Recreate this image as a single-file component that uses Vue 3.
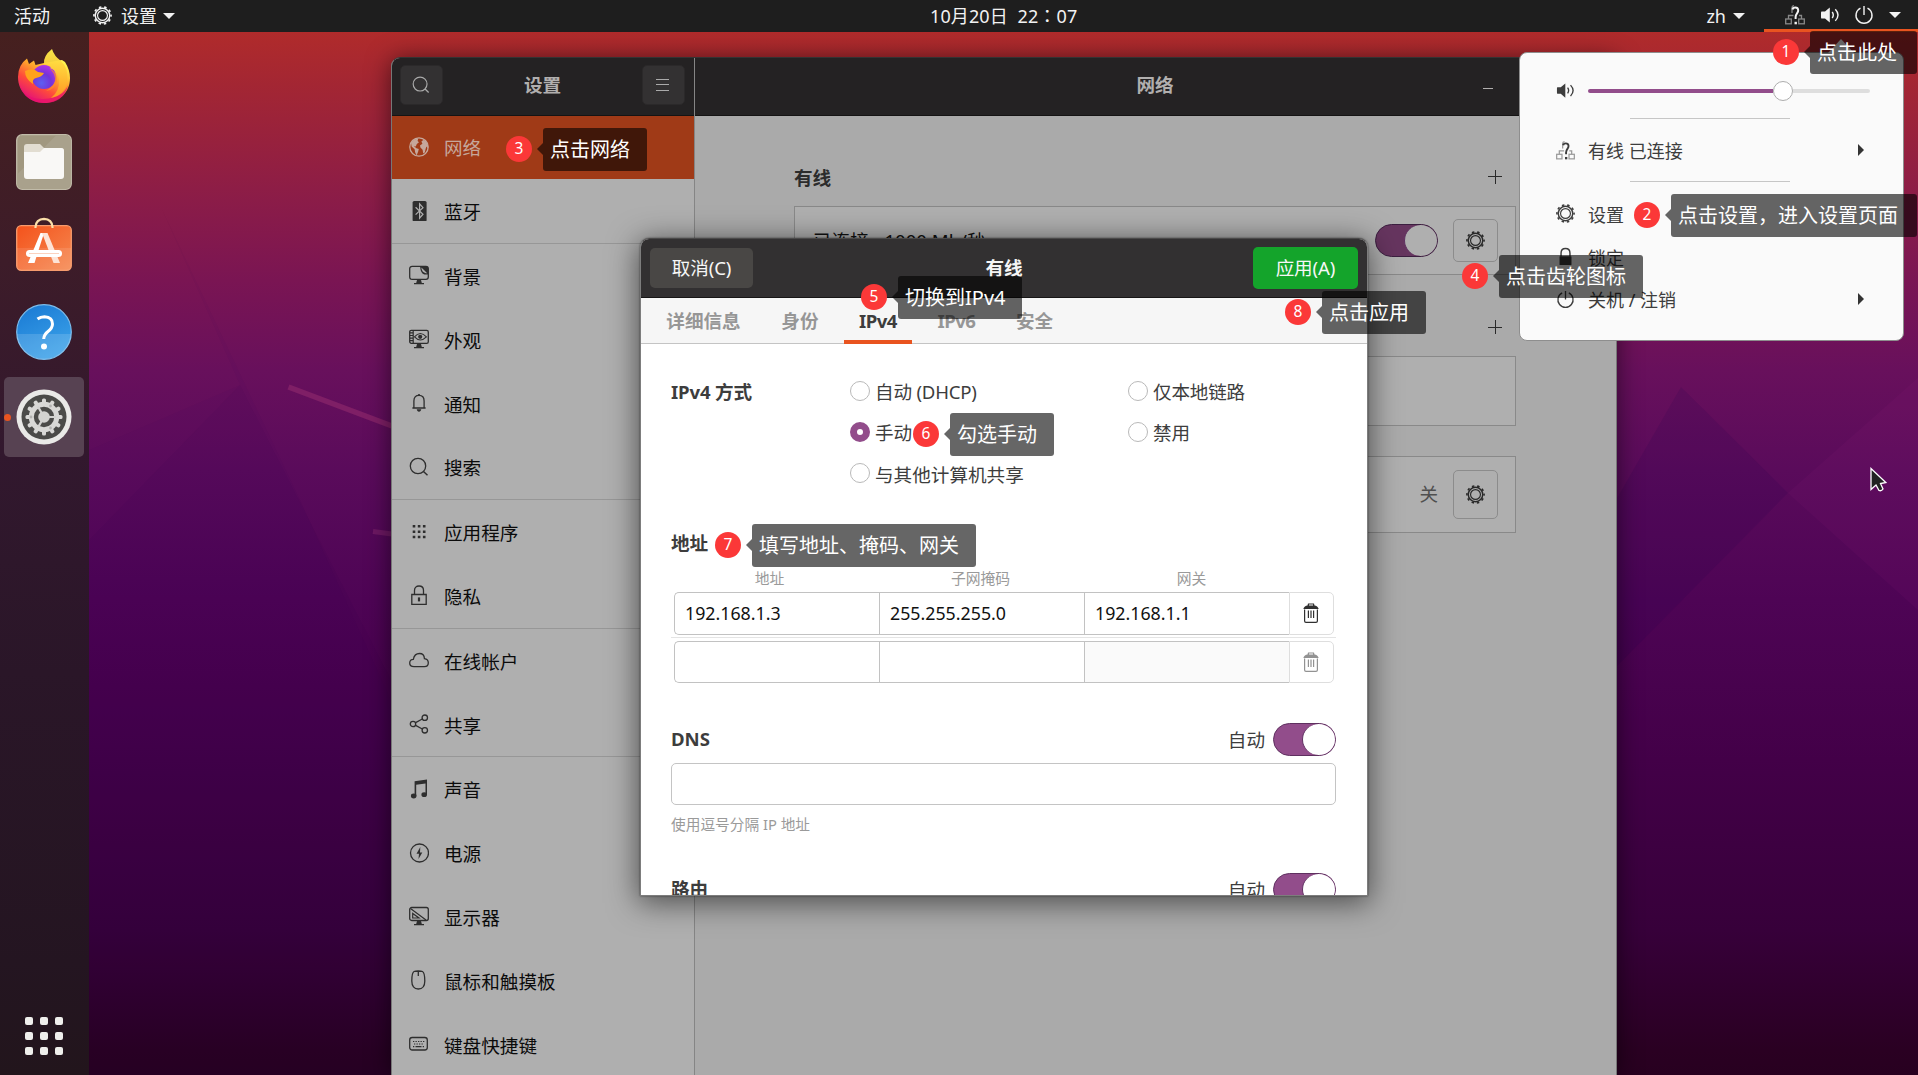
<script setup>
const groups = [
  [
    { icon: 'globe', label: '网络', active: true },
    { icon: 'bluetooth', label: '蓝牙' },
  ],
  [
    { icon: 'background', label: '背景' },
    { icon: 'appearance', label: '外观' },
    { icon: 'bell', label: '通知' },
    { icon: 'search', label: '搜索' },
  ],
  [
    { icon: 'apps', label: '应用程序' },
    { icon: 'padlock', label: '隐私' },
  ],
  [
    { icon: 'cloud', label: '在线帐户' },
    { icon: 'share', label: '共享' },
  ],
  [
    { icon: 'music', label: '声音' },
    { icon: 'energy', label: '电源' },
    { icon: 'display', label: '显示器' },
    { icon: 'mouse', label: '鼠标和触摸板' },
    { icon: 'keyboard', label: '键盘快捷键' },
  ],
]

const tabs = ['详细信息', '身份', 'IPv4', 'IPv6', '安全']
const activeTab = 'IPv4'

const methods = [
  ['自动 (DHCP)', '手动', '与其他计算机共享'],
  ['仅本地链路', '禁用'],
]
const selectedMethod = '手动'

const addressRows = [
  { cells: ['192.168.1.3', '255.255.255.0', '192.168.1.1'], filled: true },
  { cells: ['', '', ''], filled: false },
]

const steps = [
  { n: 1, x: 1786, y: 52, text: '点击此处', min: 107 },
  { n: 2, x: 1647, y: 215, text: '点击设置，进入设置页面', min: 246 },
  { n: 3, x: 519, y: 149, text: '点击网络' },
  { n: 4, x: 1475, y: 276, text: '点击齿轮图标' },
  { n: 5, x: 874, y: 297, text: '切换到IPv4' },
  { n: 6, x: 926, y: 434, text: '勾选手动' },
  { n: 7, x: 728, y: 545, text: '填写地址、掩码、网关' },
  { n: 8, x: 1298, y: 312, text: '点击应用' },
]

const dockTeeth = Array.from({ length: 12 }, (_, i) => i * 30)
</script>

<template>
  <div class="desktop">
    <svg class="sprite" width="0" height="0" aria-hidden="true">
      <symbol id="gear" viewBox="0 0 20 20">
        <circle cx="10" cy="10" r="7.6" fill="none" stroke="currentColor" stroke-width="1.5" />
        <circle cx="10" cy="10" r="9" fill="none" stroke="currentColor" stroke-width="1.7" stroke-dasharray="2.6 3.055" stroke-dashoffset="1.3" />
        <circle cx="10" cy="10" r="5.2" fill="none" stroke="currentColor" stroke-width="1.2" />
      </symbol>
      <symbol id="search" viewBox="0 0 20 20">
        <circle cx="9" cy="9" r="7.7" fill="none" stroke="currentColor" stroke-width="1.3" />
        <path d="M14.5 14.5 18.5 18.2" fill="none" stroke="currentColor" stroke-width="1.5" />
      </symbol>
      <symbol id="globe" viewBox="0 0 20 20">
        <circle cx="10" cy="10" r="9.2" fill="none" stroke="currentColor" stroke-width="1.3" />
        <path d="M2 5.5 5 2.6 9.2 1.4 8.6 4 10 5.2 7.8 7 6.8 9.4 4.8 9 7.4 11.2 9.8 12 9.2 14.6 7.6 18.6 6.2 15.4 5.6 12.2 2.6 9.6Z" fill="currentColor" />
        <path d="M12.4 4.4 14.2 3 16.6 3.6 19 8 18.8 11.4 17.4 9.6 16.6 12 15.8 15.6 14.2 16.6 13.6 12.8 11.4 10.6 11 8.4 13.4 6.8Z" fill="currentColor" />
      </symbol>
      <symbol id="bluetooth" viewBox="0 0 20 20">
        <rect x="3.6" y="0" width="14" height="20.5" rx="1.6" fill="currentColor" />
        <path d="M6.6 6.3 14 13.2 10.6 17.2V2.8L14 6.6 6.6 13.6" fill="none" stroke="#afafaf" stroke-width="1.2" />
      </symbol>
      <symbol id="background" viewBox="0 0 20 20">
        <rect x=".7" y="1.3" width="18.6" height="13" rx="2.4" fill="none" stroke="currentColor" stroke-width="1.3" />
        <path d="M11 1.3H17.5Q19.3 1.3 19.3 4V9.4H15.4Q11.8 9 11 1.3Z" fill="currentColor" />
        <path d="M12.4 2.4C12.6 5.8 14.4 8.2 18.2 8.2L16 6Z" fill="#afafaf" />
        <path d="M8 15h4l.8 3H15v1.3H5V18h2.2Z" fill="currentColor" />
      </symbol>
      <symbol id="appearance" viewBox="0 0 20 20">
        <rect x=".7" y="1.3" width="18.6" height="13" rx="1.6" fill="none" stroke="currentColor" stroke-width="1.3" />
        <path d="M4.2 1V14M1 3.9h3M1 6.5h3M1 9.1h3M1 11.7h3" stroke="currentColor" stroke-width="1.2" />
        <path d="M5.5 7.9Q11.3 1 17.4 7.9 11.3 14 5.5 7.9Z" fill="none" stroke="currentColor" stroke-width="1.1" />
        <circle cx="11.2" cy="7.8" r="2.1" fill="currentColor" />
        <path d="M8 15h4l.8 3H15v1.3H5V18h2.2Z" fill="currentColor" />
      </symbol>
      <symbol id="bell" viewBox="0 0 20 20">
        <path d="M4.9 14.6V8C4.9 4 7 2.4 10 2.4S15.1 4 15.1 8V14.6M3.4 15h13.2" fill="none" stroke="currentColor" stroke-width="1.3" />
        <path d="M9.2 1h1.6v1.5H9.2ZM7.7 16.3h4.6C12 18 11.2 18.7 10 18.7S8 18 7.7 16.3Z" fill="currentColor" />
      </symbol>
      <symbol id="apps" viewBox="0 0 20 20">
        <path d="M3.7 4.2h2.6M8.8 4.2h2.6M13.9 4.2h2.6M3.7 9.7h2.6M8.8 9.7h2.6M13.9 9.7h2.6M3.7 15h2.6M8.8 15h2.6M13.9 15h2.6" stroke="currentColor" stroke-width="2.5" />
      </symbol>
      <symbol id="padlock" viewBox="0 0 20 20">
        <path d="M2.8 9.5h14.4v9.9H2.8ZM5.5 9.5V5.4C5.5 2.6 7.4 1 10 1s4.5 1.6 4.5 4.4V9.5" fill="none" stroke="currentColor" stroke-width="1.3" />
        <path d="M10 12.4v4" stroke="currentColor" stroke-width="2.2" />
      </symbol>
      <symbol id="cloud" viewBox="0 0 20 20">
        <path d="M5 16.7C2.4 16.7.7 15.2.7 13 .7 10.800 2.300 9.300 4.300 9.300 5 6 7.300 3.500 10.500 3.500c3 0 4.800 2.200 4.900 5.100 2.200.3 3.900 1.900 3.900 4.200 0 2.400-1.600 3.900-3.900 3.900Z" fill="none" stroke="currentColor" stroke-width="1.3" />
      </symbol>
      <symbol id="share" viewBox="0 0 20 20">
        <g fill="none" stroke="currentColor" stroke-width="1.3">
          <circle cx="4" cy="10" r="2.7" />
          <circle cx="15.8" cy="3.7" r="2.7" />
          <circle cx="15.8" cy="16.3" r="2.7" />
          <path d="M6.6 8.6 13.3 5M6.6 11.4 13.3 15" />
        </g>
      </symbol>
      <symbol id="music" viewBox="0 0 20 20">
        <path d="M5.6 2.2 18 .4V15.7H16.5V4.500L7.200 5.700V17H5.600Z" fill="currentColor" />
        <ellipse cx="4.7" cy="17" rx="2.8" ry="2.4" fill="currentColor" />
        <ellipse cx="15.2" cy="15.7" rx="2.8" ry="2.4" fill="currentColor" />
      </symbol>
      <symbol id="energy" viewBox="0 0 20 20">
        <circle cx="10.5" cy="10" r="9" fill="none" stroke="currentColor" stroke-width="1.3" />
        <path d="M11.3 4 7.5 10.7H10L9.5 16 13.3 9.5H11Z" fill="currentColor" />
      </symbol>
      <symbol id="display" viewBox="0 0 20 20">
        <rect x=".7" y="1.5" width="18.6" height="13" rx="2" fill="none" stroke="currentColor" stroke-width="1.3" />
        <path d="M1.500 2.500 17 14M3.700 7.500V12H10Z" fill="none" stroke="currentColor" stroke-width="1.2" />
        <path d="M8 15h4l.8 3H15v1.300H5V18h2.200Z" fill="currentColor" />
      </symbol>
      <symbol id="mouse" viewBox="0 0 20 20">
        <path d="M5 1.500C6.500.8 12 .8 13.500 1.500 15 2.300 15.800 7 15.800 11 15.800 16 13.500 19 9.300 19S2.800 16 2.800 11C2.800 7 3.500 2.300 5 1.500ZM9.300 1V6" fill="none" stroke="currentColor" stroke-width="1.3" />
      </symbol>
      <symbol id="keyboard" viewBox="0 0 20 20">
        <rect x=".7" y="3.5" width="17.6" height="12.5" rx="2.5" fill="none" stroke="currentColor" stroke-width="1.3" />
        <path d="M4 7.500H15.500M5 10H15" stroke="currentColor" stroke-width="1.2" stroke-dasharray="1.3 1.2" />
        <path d="M4 12.700h1.300M6.500 12.700h6M13.700 12.700H15" stroke="currentColor" stroke-width="1.2" />
      </symbol>
      <symbol id="wired" viewBox="0 0 20 20">
        <g fill="none" stroke="currentColor" stroke-width="1.3" opacity=".5">
          <rect x=".7" y="14" width="5.6" height="4.8" />
          <rect x="13.7" y="14" width="5.6" height="4.8" />
          <path d="M3.500 14V10.500H8.500M16.500 14V10.500H14M7 8V2.500Q7 1 9 .7" />
        </g>
        <path d="M7.500 4.500C8 2 12.800 1.500 13.200 5 13.500 8 10.600 8.500 10.600 12V14" fill="none" stroke="currentColor" stroke-width="2" />
        <path d="M9.500 16.800h2.400v2.500H9.500Z" fill="currentColor" />
      </symbol>
      <symbol id="volume" viewBox="0 0 20 20">
        <path d="M1.500 6.500H5L9.800 2.500V17.500L5 13.500H1.500Q1 13.500 1 12V8Q1 6.500 1.500 6.500Z" fill="currentColor" />
        <path d="M12.200 7Q14.400 10 12.200 13M15.300 4.300Q20.700 10 15.300 15.900" fill="none" stroke="currentColor" stroke-width="1.4" />
      </symbol>
      <symbol id="power" viewBox="0 0 20 20">
        <path d="M6.500 3.100A8 8 0 1 0 13.500 3.100M10 1V10" fill="none" stroke="currentColor" stroke-width="1.4" />
      </symbol>
      <symbol id="lock" viewBox="0 0 20 20">
        <rect x="3.7" y="9.7" width="12.6" height="9.3" rx=".6" fill="currentColor" />
        <path d="M5.300 10V6.500C5.300 3 7.200 1.500 10 1.500s4.700 1.500 4.700 5V10" fill="none" stroke="currentColor" stroke-width="1.5" />
      </symbol>
      <symbol id="trash" viewBox="0 0 20 20">
        <path d="M2.300 6Q3.500 2.800 6.500 2.600L7 .4H13L13.500 2.600Q16.500 2.800 17.700 6ZM8 2.500H12V1.500H8Z" fill="currentColor" fill-rule="evenodd" />
        <path d="M3.600 6.500V18Q3.600 19.300 5 19.300H15Q16.400 19.300 16.400 18V6.500M7.400 7.500V15M10 7.500V15M12.600 7.500V15" fill="none" stroke="currentColor" stroke-width="1.2" />
      </symbol>
    </svg>

    <svg class="wallpaper" viewBox="0 0 1918 1075" preserveAspectRatio="none">
      <path d="M160 205 300 500 391 700V1075H89V450L240 385Z" fill="#200050" opacity=".03" />
      <path d="M240 385 89 540V1075H391V680Z" fill="#1c0048" opacity=".04" />
      <path d="M1681 387 1788 493 1616 667V500Z" fill="#200050" opacity=".13" />
      <path d="M1918 378 1788 493 1918 610Z" fill="#b03090" opacity=".07" />
      <path d="M288.500 387 392 426" stroke="#7f1f66" stroke-width="5.5" />
      <path d="M373 531.500 392 534" stroke="#6d1863" stroke-width="5" />
    </svg>

    <header class="topbar">
      <span class="activities">活动</span>
      <svg class="icon tb-gear"><use href="#gear" /></svg>
      <span class="app-name">设置</span>
      <i class="caret"></i>
      <span class="clock">10月20日&nbsp; 22<span class="colon">：</span>07</span>
      <span class="lang">zh</span>
      <i class="caret lang-caret"></i>
      <div class="tray">
        <svg class="icon"><use href="#wired" /></svg>
        <svg class="icon"><use href="#volume" /></svg>
        <svg class="icon"><use href="#power" /></svg>
        <i class="caret"></i>
      </div>
    </header>

    <nav class="dock">
      <svg class="dock-icon firefox" viewBox="0 0 56 56">
        <defs>
          <linearGradient id="ffBody" x1=".85" y1=".1" x2=".25" y2=".95">
            <stop offset="0" stop-color="#fff44f" />
            <stop offset=".35" stop-color="#ffa72b" />
            <stop offset=".65" stop-color="#ff4b3a" />
            <stop offset="1" stop-color="#e3107a" />
          </linearGradient>
          <linearGradient id="ffFlame" x1=".5" y1="0" x2=".5" y2="1">
            <stop offset="0" stop-color="#fff04a" />
            <stop offset="1" stop-color="#ff9a22" />
          </linearGradient>
          <radialGradient id="ffGlobe" cx=".4" cy=".75" r=".8">
            <stop offset="0" stop-color="#5d5ff0" />
            <stop offset=".5" stop-color="#7434d8" />
            <stop offset="1" stop-color="#b833e8" />
          </radialGradient>
        </defs>
        <path d="M11 10.500 13 16 18 12.500 19.500 17 28 15 46 12 49 14Q54 22 54 30C54 45 42 55 28 55S2 44 2 29Q2 17 11 10.500Z" fill="url(#ffBody)" />
        <path d="M3 35Q8 52 28 51 47 50 52 37 48 55 28 55 8 54 3 35Z" fill="#e8106f" opacity=".75" />
        <circle cx="28" cy="29" r="12" fill="url(#ffGlobe)" />
        <path d="M28 16Q27 8 36 1 38 8 45 13 53 20 51 34 49 47 35 50 44 43 43 31 42 23 34 20 38 18 28 16Z" fill="url(#ffFlame)" opacity=".95" />
        <path d="M33 20Q42 24 41 33 39 42 30 43 40 37 39 30 38 24 33 20Z" fill="#ff8a2a" opacity=".7" />
        <path d="M9 23Q17 19 22 24L28 25Q26 29 20 30 16 31 17 36 9 31 9 23Z" fill="#ffa21c" />
      </svg>
      <svg class="dock-icon" viewBox="0 0 56 56">
        <rect x=".7" y=".7" width="54.6" height="54.6" rx="5.5" fill="#a19880" stroke="#c1bba9" stroke-width="1.3" />
        <path d="M1.500 40 40 1.500H50Q54.500 1.500 54.500 6V50Q54.500 54.500 50 54.500H6Q1.500 54.500 1.500 50Z" fill="#a9a18c" />
        <path d="M8 13Q8 10 11 10H24L28 14H45Q48 14 48 17V25H8Z" fill="#e2ddd1" />
        <path d="M8 18H24L28 14H45Q48 14 48 17V42Q48 45 45 45H11Q8 45 8 42Z" fill="#f9f8f6" />
      </svg>
      <svg class="dock-icon software" viewBox="0 0 56 56">
        <defs>
          <linearGradient id="bag" x1="0" y1="0" x2="1" y2="1">
            <stop offset="0" stop-color="#f4521b" />
            <stop offset="1" stop-color="#f58a52" />
          </linearGradient>
        </defs>
        <rect x=".7" y="9.7" width="54.6" height="44.6" rx="4.5" fill="url(#bag)" stroke="#f79b6d" stroke-width="1.3" />
        <path d="M1 32H55V50Q55 54 51 54H5Q1 54 1 50Z" fill="#fff" opacity=".1" />
        <path d="M19.500 12V11Q20 3 28 2.800 36 3 36.500 11V12" fill="none" stroke="#fbe0a9" stroke-width="2.2" />
        <path d="M24.500 17H28L18.500 47H12Z" fill="#fff" />
        <path d="M26 17H31.500L44 47H37.500Z" fill="#fde3d6" />
        <rect x="10" y="34" width="36" height="7" rx="3.5" fill="#fff" />
        <path d="M13 37.500H43" stroke="#fbd2bf" stroke-width="1" />
      </svg>
      <svg class="dock-icon help" viewBox="0 0 56 56">
        <defs>
          <linearGradient id="helpBlue" x1="0" y1="0" x2=".5" y2="1">
            <stop offset="0" stop-color="#1878d3" />
            <stop offset="1" stop-color="#3aa0e8" />
          </linearGradient>
        </defs>
        <circle cx="28" cy="28" r="27.3" fill="url(#helpBlue)" stroke="#7cbdec" stroke-width="1.2" />
        <path d="M1 30H55A27 25 0 0 1 1 30Z" fill="#fff" opacity=".14" />
        <path d="M21.500 15Q24.500 12.700 28.500 12.700 36.500 13 36.500 20 36.500 24 32 27.500 28 30.500 27.700 35" fill="none" stroke="#fff" stroke-width="3" />
        <circle cx="28" cy="42.5" r="3" fill="#fff" />
      </svg>
      <div class="dock-active">
        <svg class="dock-icon" viewBox="0 0 56 56">
          <circle cx="28" cy="28" r="27.5" fill="#e9e9e7" />
          <circle cx="28" cy="28" r="22.5" fill="#4b4b49" />
          <g fill="#d8d8d6">
            <rect v-for="a in dockTeeth" :key="a" x="26" y="9.5" width="4" height="6" rx="1.5" :transform="`rotate(${a} 28 28)`" />
          </g>
          <circle cx="28" cy="28" r="12.7" fill="none" stroke="#d8d8d6" stroke-width="5" />
          <circle cx="28" cy="28" r="5.8" fill="#d2d2d0" />
          <path d="M28 28H40M28 28 22 17.600M28 28 22 38.400" stroke="#d2d2d0" stroke-width="2.2" />
          <g fill="#b2b2b0"><circle cx="15" cy="28" r="1.4" /><circle cx="34.5" cy="17" r="1.4" /><circle cx="34.5" cy="39" r="1.4" /></g>
        </svg>
      </div>
      <div class="app-grid"><i v-for="n in 9" :key="n"></i></div>
    </nav>

    <section class="settings">
      <aside class="sidebar">
        <div class="titlebar">
          <button class="tool"><svg class="icon"><use href="#search" /></svg></button>
          <b>设置</b>
          <button class="tool"><span class="burger"></span></button>
        </div>
        <ul v-for="(group, g) in groups" :key="g" class="group">
          <li v-for="item in group" :key="item.label" class="item" :class="{ active: item.active }">
            <svg class="icon"><use :href="'#' + item.icon" /></svg>
            <span>{{ item.label }}</span>
          </li>
        </ul>
      </aside>
      <main class="panel">
        <div class="titlebar">
          <b>网络</b>
          <i class="minimize"></i>
        </div>
        <div class="panel-body">
          <div class="section-head"><b>有线</b><i class="plus"></i></div>
          <div class="card wired-card">
            <span class="status">已连接 - 1000 Mb/秒</span>
            <span class="switch dim"></span>
            <span class="gear-btn"><svg class="icon"><use href="#gear" /></svg></span>
          </div>
          <div class="section-head second"><i class="plus"></i></div>
          <div class="card"></div>
          <div class="card proxy-card">
            <span class="off">关</span>
            <span class="gear-btn tall"><svg class="icon"><use href="#gear" /></svg></span>
          </div>
        </div>
      </main>
    </section>

    <section class="dialog">
      <div class="dialog-head">
        <button class="btn cancel">取消(C)</button>
        <b>有线</b>
        <button class="btn apply">应用(A)</button>
      </div>
      <div class="tabs">
        <span v-for="t in tabs" :key="t" class="tab" :class="{ on: t === activeTab, latin: t.startsWith('IP') }">{{ t }}</span>
      </div>
      <div class="form">
        <div class="method">
          <b class="method-label">IPv4 方式</b>
          <div v-for="(col, c) in methods" :key="c" class="radios">
            <div v-for="m in col" :key="m" class="radio">
              <i class="dot" :class="{ checked: m === selectedMethod }"></i><span>{{ m }}</span>
            </div>
          </div>
        </div>
        <b class="addr-title">地址</b>
        <div class="addr-heads"><span>地址</span><span>子网掩码</span><span>网关</span></div>
        <div v-for="(row, r) in addressRows" :key="r" class="addr-row" :class="{ empty: !row.filled }">
          <span v-for="(cell, i) in row.cells" :key="i" class="cell">{{ cell }}</span>
          <span class="del"><svg class="icon"><use href="#trash" /></svg></span>
        </div>
        <div class="auto-row dns"><b>DNS</b><span>自动</span><i class="switch"></i></div>
        <div class="dns-input"></div>
        <div class="hint">使用逗号分隔 IP 地址</div>
        <div class="auto-row route"><b>路由</b><span>自动</span><i class="switch"></i></div>
      </div>
    </section>

    <section class="menu">
      <i class="menu-tip"></i>
      <div class="menu-row volume-row">
        <svg class="icon"><use href="#volume" /></svg>
        <div class="slider"><i class="fill"></i><i class="knob"></i><i class="rest"></i></div>
      </div>
      <hr />
      <div class="menu-row wired-row">
        <svg class="icon"><use href="#wired" /></svg><span>有线 已连接</span><i class="more"></i>
      </div>
      <hr />
      <div class="menu-row first"><svg class="icon"><use href="#gear" /></svg><span>设置</span></div>
      <div class="menu-row"><svg class="icon"><use href="#lock" /></svg><span>锁定</span></div>
      <div class="menu-row"><svg class="icon"><use href="#power" /></svg><span>关机 / 注销</span><i class="more"></i></div>
    </section>

    <svg class="cursor" viewBox="0 0 17 25">
      <path d="M1 1.500V22.500L6 18 9 23.500Q11.500 24.500 13 22L10.500 16.500 15.800 15.500Z" fill="#222" stroke="#fff" stroke-width="1.3" />
    </svg>

    <div v-for="s in steps" :key="s.n" class="step" :style="{ left: s.x - 13 + 'px', top: s.y - 21 + 'px' }">
      <span class="badge">{{ s.n }}</span>
      <span class="tip" :style="{ minWidth: (s.min || 0) + 'px' }">{{ s.text }}</span>
    </div>
  </div>
</template>

<style>
body {
  margin: 0;
  overflow: hidden;
}
</style>

<style scoped>
* {
  box-sizing: border-box;
}
.desktop {
  position: relative;
  width: 1918px;
  height: 1075px;
  overflow: hidden;
  font-family: "Noto Sans", "Noto Sans CJK SC", sans-serif;
  font-size: 18.6px;
  line-height: 26px;
  color: #3d3d3d;
  white-space: nowrap;
  background: linear-gradient(#b02b2b 32px, #a32633 85px, #8b1c48 200px, #7a1553 280px, #68105c 370px, #5a0b5b 470px, #4e0455 600px, #430048 760px, #37003a 930px, #2a0022 1050px, #280020 1075px);
}
.sprite {
  position: absolute;
}
.wallpaper {
  position: absolute;
  inset: 0;
  width: 100%;
  height: 100%;
}
.icon {
  display: block;
  flex: none;
  width: 20px;
  height: 20px;
  overflow: visible;
}
.topbar {
  position: relative;
  display: flex;
  align-items: center;
  height: 32px;
  padding-left: 14px;
  padding-bottom: 1px;
  background: #1e1e1e;
  color: #f2f2f2;
  font-size: 18px;
}
.activities {
  width: 79px;
}
.tb-gear {
  width: 19px;
  height: 19px;
  margin-right: 9px;
}
.app-name {
  width: 42px;
}
.caret {
  border: 6px solid transparent;
  border-top: 6.5px solid currentColor;
  border-bottom: 0;
}
.clock {
  width: 150px;
  margin-left: 755px;
  letter-spacing: .12px;
}
.colon {
  font-family: "Noto Sans CJK TC", sans-serif;
}
.lang {
  margin-left: auto;
  margin-right: 7px;
}
.lang-caret {
  margin-right: 19px;
}
.tray {
  display: flex;
  align-items: center;
  gap: 14.6px;
  width: 154px;
  height: 32px;
  margin-bottom: -1px;
  padding-top: 1px;
  padding-left: 21px;
  border-bottom: 3px solid #e95420;
}
.dock {
  position: relative;
  display: flex;
  flex-direction: column;
  align-items: center;
  width: 89px;
  height: 1043px;
  padding-top: 16px;
  background: linear-gradient(#46201f, #3d1c29 230px, #32182e 420px, #2a1628 640px, #241521 930px, #22151c);
}
.dock-icon {
  display: block;
  width: 56px;
  height: 56px;
  margin-right: 1px;
  margin-bottom: 28px;
}
.firefox {
  margin-bottom: 30px;
}
.software {
  margin-top: -2px;
  margin-bottom: 32px;
}
.help {
  margin-bottom: 17px;
}
.dock-active {
  display: flex;
  align-items: center;
  justify-content: center;
  width: 80px;
  height: 80px;
  margin-right: 1px;
  border-radius: 5px;
  background: #574252;
}
.dock-active .dock-icon {
  margin: 0 12px 0 0;
}
.dock-active::before {
  content: "";
  flex: none;
  width: 7px;
  height: 7px;
  margin-right: 5px;
  border-radius: 50%;
  background: #e95420;
}
.app-grid {
  display: grid;
  grid-template-columns: repeat(3, 8px);
  gap: 7px;
  margin: auto 1px 20px 0;
}
.app-grid i {
  height: 8px;
  border-radius: 2px;
  background: #efefec;
}
.settings {
  position: absolute;
  left: 391px;
  top: 57px;
  display: flex;
  width: 1226px;
  height: 1018px;
  border: 1px solid #777;
  border-top-color: #353333;
  border-bottom: 0;
  border-radius: 9px 9px 0 0;
  overflow: clip;
  background: #aaa;
  box-shadow: 0 2px 24px rgba(0, 0, 0, .55);
}
.sidebar {
  width: 303px;
  background: #afafaf;
  border-right: 1px solid #858585;
}
.titlebar {
  display: flex;
  align-items: center;
  justify-content: space-between;
  height: 57.5px;
  padding: 0 9px 2px 8px;
  background: #242223;
  border-bottom: 1px solid #151414;
  color: #b1afae;
}
.tool {
  display: flex;
  align-items: center;
  justify-content: center;
  width: 43px;
  height: 40px;
  padding: 0 1px 1px 0;
  border: 1px solid #2b292a;
  border-radius: 5px;
  background: #333132;
  color: #aaa;
}
.tool .icon {
  width: 18px;
  height: 18px;
}
.burger {
  width: 13px;
  height: 12px;
  border-top: 1px solid #aaa;
  border-bottom: 1px solid #aaa;
  background: linear-gradient(#aaa, #aaa) center / 100% 1px no-repeat;
}
.group {
  margin: 0;
  padding: 0;
  list-style: none;
  border-bottom: 1px solid #979797;
}
.item {
  display: flex;
  align-items: center;
  gap: 15px;
  height: 63.8px;
  padding: 0 0 1px 17px;
  color: #2e2e2e;
}
.item span {
  padding-top: 3px;
  color: #0b0b0b;
}
.item.active {
  background: #a03a17;
}
.item.active .icon,
.item.active span {
  color: #c6a79b;
}
.panel {
  flex: 1;
}
.panel .titlebar {
  justify-content: center;
  position: relative;
}
.minimize {
  position: absolute;
  right: 123px;
  top: 30px;
  width: 10px;
  height: 1px;
  background: #b1afae;
}
.panel-body {
  padding: 41px 100px 0 99px;
}
.section-head {
  display: flex;
  align-items: center;
  height: 42px;
  padding-right: 14px;
  color: #2c2c2c;
}
.plus {
  width: 14px;
  height: 14px;
  margin-left: auto;
  margin-top: -2px;
  background: linear-gradient(#2a2a2a, #2a2a2a) center / 14px 1px no-repeat, linear-gradient(#2a2a2a, #2a2a2a) center / 1px 14px no-repeat;
}
.card {
  display: flex;
  align-items: center;
  height: 70px;
  border: 1px solid #898989;
  background: #afafaf;
  padding: 0 17px 0 18px;
}
.wired-card {
  height: 69px;
  margin-top: 7.5px;
}
.status {
  flex: 1;
  color: #111;
}
.switch {
  display: flex;
  justify-content: flex-end;
  width: 63px;
  height: 33px;
  border: 1px solid #5f3060;
  border-radius: 17px;
  background: #924d8b;
}
.switch::after {
  content: "";
  width: 32px;
  height: 31px;
  border-left: 1px solid #5f3060;
  border-radius: 50%;
  background: #fff;
}
.switch.dim {
  background: #66355f;
  border-color: #3c1f40;
}
.switch.dim::after {
  background: #afafaf;
}
.gear-btn {
  display: flex;
  align-items: center;
  justify-content: center;
  width: 45px;
  height: 43px;
  margin-left: 15px;
  border: 1px solid #8c8c8c;
  border-radius: 5px;
  color: #292929;
}
.gear-btn .icon {
  width: 19px;
  height: 19px;
}
.gear-btn.tall {
  height: 49px;
}
.second {
  margin-top: 32px;
  margin-bottom: 7px;
}
.proxy-card {
  height: 77px;
  margin-top: 29.5px;
}
.off {
  margin-left: auto;
  color: #4f4f4f;
}
.dialog {
  position: absolute;
  left: 640px;
  top: 238px;
  width: 728px;
  height: 658px;
  border: 1px solid #7d7d7d;
  border-top-color: #4a4949;
  border-radius: 9px 9px 0 0;
  overflow: hidden;
  background: #fff;
  box-shadow: 0 5px 30px 2px rgba(0, 0, 0, .55), 0 0 2px rgba(0, 0, 0, .6);
}
.dialog-head {
  display: grid;
  grid-template-columns: 105px 1fr 105px;
  align-items: center;
  height: 59px;
  padding: 0 9px;
  background: #323031;
  border-bottom: 1px solid #171616;
  color: #f5f5f5;
  text-align: center;
}
.btn {
  height: 42px;
  padding: 0;
  border: 0;
  border-radius: 5px;
  color: #f7f7f7;
  font: inherit;
  letter-spacing: -.1px;
}
.cancel {
  width: 103px;
  height: 40px;
  background: #494745;
}
.apply {
  background: #14a42b;
}
.tabs {
  display: flex;
  gap: 10px;
  height: 46px;
  padding-left: 10px;
  background: #f6f6f6;
  border-bottom: 1px solid #c4c4c4;
  font-weight: 700;
  color: #969696;
}
.tab {
  height: 46px;
  padding: 10px 15.3px 0;
}
.tab.latin {
  letter-spacing: -.55px;
}
.tab.on {
  color: #3d3d3d;
  border-bottom: 4px solid #e95420;
}
.form {
  padding: 26px 31px 0 30px;
}
.method {
  display: grid;
  grid-template-columns: 179px 278px 1fr;
  height: 153px;
}
.method-label {
  padding-top: 9px;
  letter-spacing: -.15px;
}
.radio {
  display: flex;
  align-items: center;
  gap: 5px;
  height: 41.3px;
}
.radio span {
  padding-top: 3px;
}
.radio:first-child span {
  letter-spacing: -.2px;
}
.dot {
  width: 20px;
  height: 20px;
  border: 1px solid #b9b9b9;
  border-radius: 50%;
  background: #fff;
}
.dot.checked {
  border: 7px solid #924d8b;
}
.addr-title {
  display: block;
  height: 42px;
  padding-top: 7px;
}
.addr-heads {
  display: grid;
  grid-template-columns: repeat(3, 211px);
  height: 27px;
  margin-left: -7px;
  color: #9a9a9a;
  font-size: 14.8px;
  text-align: center;
}
.addr-row {
  display: grid;
  grid-template-columns: 205px 205px 205px 45px;
  height: 42px;
  margin: 0 3px;
}
.cell {
  padding: 8px 10px;
  border: 1px solid #c2c2c2;
  border-right: 0;
  font-size: 17.8px;
  line-height: 25px;
  color: #111;
}
.cell:first-child {
  border-radius: 5px 0 0 5px;
}
.del {
  display: flex;
  align-items: center;
  justify-content: center;
  border: 1px solid #dedede;
  border-radius: 0 5px 5px 0;
  color: #303030;
  padding: 0 2px 1px 0;
}
.empty {
  position: relative;
  margin-top: 7px;
}
.empty::before {
  content: "";
  position: absolute;
  left: -3px;
  right: -3px;
  top: -4px;
  height: 1px;
  background: #e4e4e4;
}
.empty .cell:nth-child(3) {
  background: #fafafa;
}
.empty .del {
  color: #929292;
}
.auto-row {
  display: flex;
  align-items: center;
  height: 33px;
}
.auto-row b {
  margin-top: -1px;
}
.auto-row span {
  margin-left: auto;
  margin-right: 8px;
}
.dns {
  margin-top: 40px;
}
.dns-input {
  height: 42px;
  margin-top: 7px;
  border: 1px solid #c4c4c4;
  border-radius: 5px;
}
.hint {
  margin-top: 6px;
  color: #9a9a9a;
  font-size: 14.7px;
}
.route {
  margin-top: 36px;
}
.menu {
  position: absolute;
  left: 1519px;
  top: 52px;
  width: 385px;
  height: 289px;
  padding: 17px 33px 0 36px;
  border: 1px solid #8e8e8e;
  border-radius: 8px;
  background: #fafafa;
  font-size: 18px;
}
.menu-tip {
  position: absolute;
  left: 308px;
  top: -14px;
  border: 13px solid transparent;
  border-top: 0;
  border-bottom: 14px solid #fafafa;
}
.menu-row {
  display: flex;
  align-items: center;
  gap: 13px;
  height: 42.6px;
}
.menu-row span {
  padding-top: 1px;
}
.menu-row .icon {
  width: 19px;
  height: 19px;
  margin-top: -1px;
}
.menu-row.first {
  margin-top: 11px;
}
.menu hr {
  width: 160px;
  height: 1px;
  margin: 5px 0 0 74px;
  border: 0;
  background: #c6c6c6;
}
.wired-row {
  margin-top: 11px;
}
.wired-row + hr {
  margin-top: 9px;
}
.more {
  margin-left: auto;
  margin-right: 6px;
  margin-top: -1px;
  border: 6px solid transparent;
  border-left: 6px solid #333;
  border-right: 0;
}
.slider {
  display: flex;
  align-items: center;
  width: 282px;
  margin-top: -1px;
}
.fill {
  width: 185px;
  height: 4px;
  border-radius: 2px 0 0 2px;
  background: #924d8b;
}
.knob {
  width: 20px;
  height: 20px;
  border: 1px solid #adadad;
  border-radius: 50%;
  background: #fff;
}
.rest {
  flex: 1;
  height: 4px;
  border-radius: 0 2px 2px 0;
  background: #dedede;
}
.cursor {
  position: absolute;
  left: 1870px;
  top: 467px;
  width: 17px;
  height: 25px;
}
.step {
  position: absolute;
  display: flex;
  align-items: center;
  height: 43px;
  color: #fff;
}
.badge {
  width: 26px;
  height: 26px;
  margin: 0 11px 1px 0;
  border-radius: 50%;
  background: #fb3838;
  font-size: 15.5px;
  line-height: 24px;
  text-align: center;
}
.tip {
  position: relative;
  height: 43px;
  padding: 0 17px 0 7px;
  border-radius: 3px;
  background: rgba(0, 0, 0, .6);
  font-size: 20px;
  line-height: 43px;
}
.tip::before {
  content: "";
  position: absolute;
  left: -6px;
  top: 15px;
  border: 6px solid transparent;
  border-right-color: rgba(0, 0, 0, .6);
  border-left: 0;
}
</style>
